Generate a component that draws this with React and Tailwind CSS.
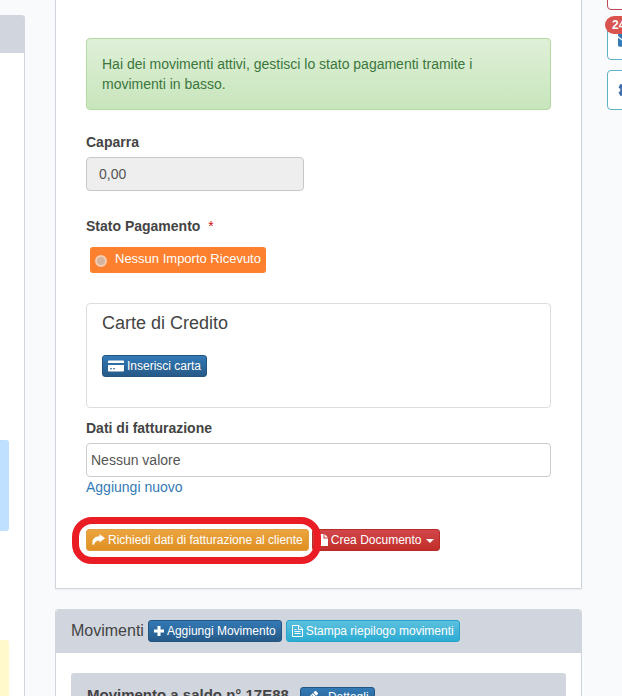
import { useState } from 'react';
import { FaCog, FaEnvelope, FaPencilAlt } from 'react-icons/fa';

const buttonColors = {
  blue: 'border-[#245580] bg-linear-to-b from-[#337ab7] to-[#265a88]',
  orange: 'border-[#e0a040] bg-linear-to-b from-[#eba43f] to-[#e09020]',
  red: 'border-[#b92c28] bg-linear-to-b from-[#d2464a] to-[#c12e2a]',
  cyan: 'border-[#28a4c9] bg-linear-to-b from-[#5bc0de] to-[#2aabd2]',
};

const SmallButton = ({ color, children }) => (
  <button
    type="button"
    className={`flex h-[22px] items-center gap-[3px] whitespace-nowrap rounded-[3px] border px-[5px] text-xs text-white ${buttonColors[color]}`}
  >
    {children}
  </button>
);

const CardIcon = () => (
  <svg width="16" height="12" viewBox="0 0 16 12" fill="currentColor" aria-hidden="true">
    <path d="M1 0.5h14a1 1 0 0 1 1 1V3H0V1.5a1 1 0 0 1 1-1z" />
    <path
      fillRule="evenodd"
      d="M0 5h16v5.500a1 1 0 0 1-1 1H1a1 1 0 0 1-1-1zM2 8.200v1h2v-1zM5 8.200v1h2v-1z"
    />
  </svg>
);

const ShareIcon = () => (
  <svg width="13" height="12" viewBox="0 0 13 12" fill="currentColor" aria-hidden="true">
    <path d="M7.500 0L13 4.300L7.500 8.600V6.500C4.800 6.500 3 7.600 2 10.800H0.500C-0.300 5.600 2.300 2.300 7.500 2.200z" />
  </svg>
);

const FileIcon = () => (
  <svg width="10" height="12" viewBox="0 0 10 12" fill="currentColor" aria-hidden="true">
    <path d="M1 0h4.500v4.500H10V12H1zM6.500 0L10 3.500H6.500z" />
  </svg>
);

const PlusIcon = () => (
  <svg width="10" height="10" viewBox="0 0 10 10" fill="currentColor" aria-hidden="true">
    <path d="M3.500 0h3v3.500H10v3H6.500V10h-3V6.500H0v-3h3.500z" />
  </svg>
);

const FileTextIcon = () => (
  <svg width="11" height="12" viewBox="0 0 11 12" fill="none" stroke="currentColor" aria-hidden="true">
    <path d="M0.500 0.500H7L10.500 4v7.500H0.500zM6.500 0.500v4h4M2.500 6.500h6M2.500 8.500h6M2.500 4.500h2" />
  </svg>
);

const CaretIcon = () => (
  <svg width="8" height="4" viewBox="0 0 8 4" fill="currentColor" className="ml-px mt-0.5" aria-hidden="true">
    <path d="M0 0h8L4 4z" />
  </svg>
);

const LeftColumn = () => (
  <aside className="w-[25px] shrink-0 pt-[15px]">
    <div className="h-full rounded-tr-[3px] border-r border-[#d1d5de] bg-white">
      <div className="h-[38px] rounded-tr-[3px] bg-[#d1d5de]" />
      <div className="mt-[387px] h-[91px] w-[9px] rounded-r-[3px] bg-[#bfe0ff]" />
      <div className="mt-[109px] h-[91px] w-[9px] rounded-r-[3px] bg-[#fff9cc]" />
    </div>
  </aside>
);

const RightColumn = () => (
  <nav className="-mt-[30px] flex w-[15px] shrink-0 flex-col gap-[10px]">
    <button type="button" aria-label="Elimina" className="h-10 w-10 rounded-[4px] border border-[#b94a55] bg-white" />
    <button
      type="button"
      aria-label="Messaggi"
      className="relative flex h-10 w-10 items-center justify-center rounded-[4px] border border-[#5fb3c8] bg-white text-[#337ab7]"
    >
      <FaEnvelope size={18} />
      <span className="absolute -left-[3px] -top-[5px] flex h-[18px] items-center rounded-full bg-[#d9534f] px-[7px] text-xs font-bold text-white">
        24
      </span>
    </button>
    <button
      type="button"
      aria-label="Impostazioni"
      className="flex h-10 w-10 items-center justify-center rounded-[4px] border border-[#5fb3c8] bg-white text-[#3f6eb0]"
    >
      <FaCog size={18} />
    </button>
  </nav>
);

const PaymentPanel = () => {
  const [paid, setPaid] = useState(false);
  const [billing, setBilling] = useState('Nessun valore');

  return (
    <section className="border border-t-0 border-[#d1d5de] bg-white px-[30px] pb-[37px] pt-[38px] shadow-xs">
      <div className="rounded-[4px] border border-[#b2dba1] bg-linear-to-b from-[#dff0d8] to-[#c8e5bc] p-[15px] text-[#3c763d]">
        Hai dei movimenti attivi, gestisci lo stato pagamenti tramite i movimenti in basso.
      </div>

      <label htmlFor="caparra" className="mt-[22px] block font-bold">
        Caparra
      </label>
      <input
        id="caparra"
        type="text"
        value="0,00"
        readOnly
        className="mt-[5px] block h-[34px] w-[218px] rounded-[4px] border border-[#c8c8c8] bg-[#eeeeee] px-3 text-[#555555]"
      />

      <p className="mt-[25px] font-bold">
        Stato Pagamento <span className="ml-1 font-normal text-[#d01020]">*</span>
      </p>
      <label className="ml-1 mt-[11px] flex h-[26px] w-fit items-center gap-2 rounded-[3px] bg-[#fd802e] px-[5px] pb-[2px] text-[13px] text-white">
        <input
          type="radio"
          checked={paid}
          onChange={() => setPaid(true)}
          className="mt-1 h-3 w-3 appearance-none rounded-full border-2 border-[#f5cdb4] bg-[#d6b39c]"
        />
        Nessun Importo Ricevuto
      </label>

      <div className="mt-[30px] rounded-[4px] border border-[#dddddd] px-[15px] pb-[30px] pt-[7px]">
        <h3 className="mb-[20px] text-lg leading-6">Carte di Credito</h3>
        <div className="flex">
          <SmallButton color="blue">
            <CardIcon />
            Inserisci carta
          </SmallButton>
        </div>
      </div>

      <label htmlFor="fatturazione" className="mt-[10px] block font-bold">
        Dati di fatturazione
      </label>
      <input
        id="fatturazione"
        type="text"
        value={billing}
        onChange={(event) => setBilling(event.target.value)}
        className="mt-[5px] block h-[34px] w-full rounded-[4px] border border-[#cccccc] bg-white px-1 text-[#555555]"
      />
      <a href="#nuovo" className="block w-fit text-[#337ab7]">
        Aggiungi nuovo
      </a>

      <div className="mt-8 flex gap-[3px]">
        <div className="relative">
          <SmallButton color="orange">
            <ShareIcon />
            Richiedi dati di fatturazione al cliente
          </SmallButton>
          <div className="pointer-events-none absolute -left-[14px] -right-3 -top-3 -bottom-[13px] rounded-[20px] border-7 border-[#ea1c24]" />
        </div>
        <SmallButton color="red">
          <FileIcon />
          Crea Documento
          <CaretIcon />
        </SmallButton>
      </div>
    </section>
  );
};

const MovementsPanel = () => (
  <section className="mt-5 rounded-t-[3px] border border-[#d1d5de] bg-white">
    <header className="flex h-[43px] items-center gap-1 rounded-t-[3px] bg-[#d1d5de] px-[15px] pb-[2px]">
      <h2 className="text-base leading-5">Movimenti</h2>
      <SmallButton color="blue">
        <PlusIcon />
        Aggiungi Movimento
      </SmallButton>
      <SmallButton color="cyan">
        <FileTextIcon />
        Stampa riepilogo movimenti
      </SmallButton>
    </header>
    <div className="px-[15px] pt-5">
      <div className="flex items-start gap-[11px] rounded-t-[3px] bg-[#d1d5de] px-4 py-3">
        <h3 className="text-[15px] font-bold leading-5">Movimento a saldo n° 17E88</h3>
        <button
          type="button"
          className="mt-0.5 flex h-[22px] items-center gap-[10px] rounded-[3px] border border-[#245580] bg-linear-to-b from-[#337ab7] to-[#265a88] px-[5px] pb-[2px] text-xs text-white"
        >
          <FaPencilAlt size={12} />
          Dettagli
        </button>
      </div>
    </div>
  </section>
);

const App = () => {
  return (
    <div className="flex h-screen overflow-hidden bg-[#f9fafc] font-['Liberation_Sans',Arial,sans-serif] text-sm text-[#444444]">
      <LeftColumn />
      <main className="ml-[30px] mr-[25px] min-w-0 flex-1">
        <PaymentPanel />
        <MovementsPanel />
      </main>
      <RightColumn />
    </div>
  );
};

export default App;
